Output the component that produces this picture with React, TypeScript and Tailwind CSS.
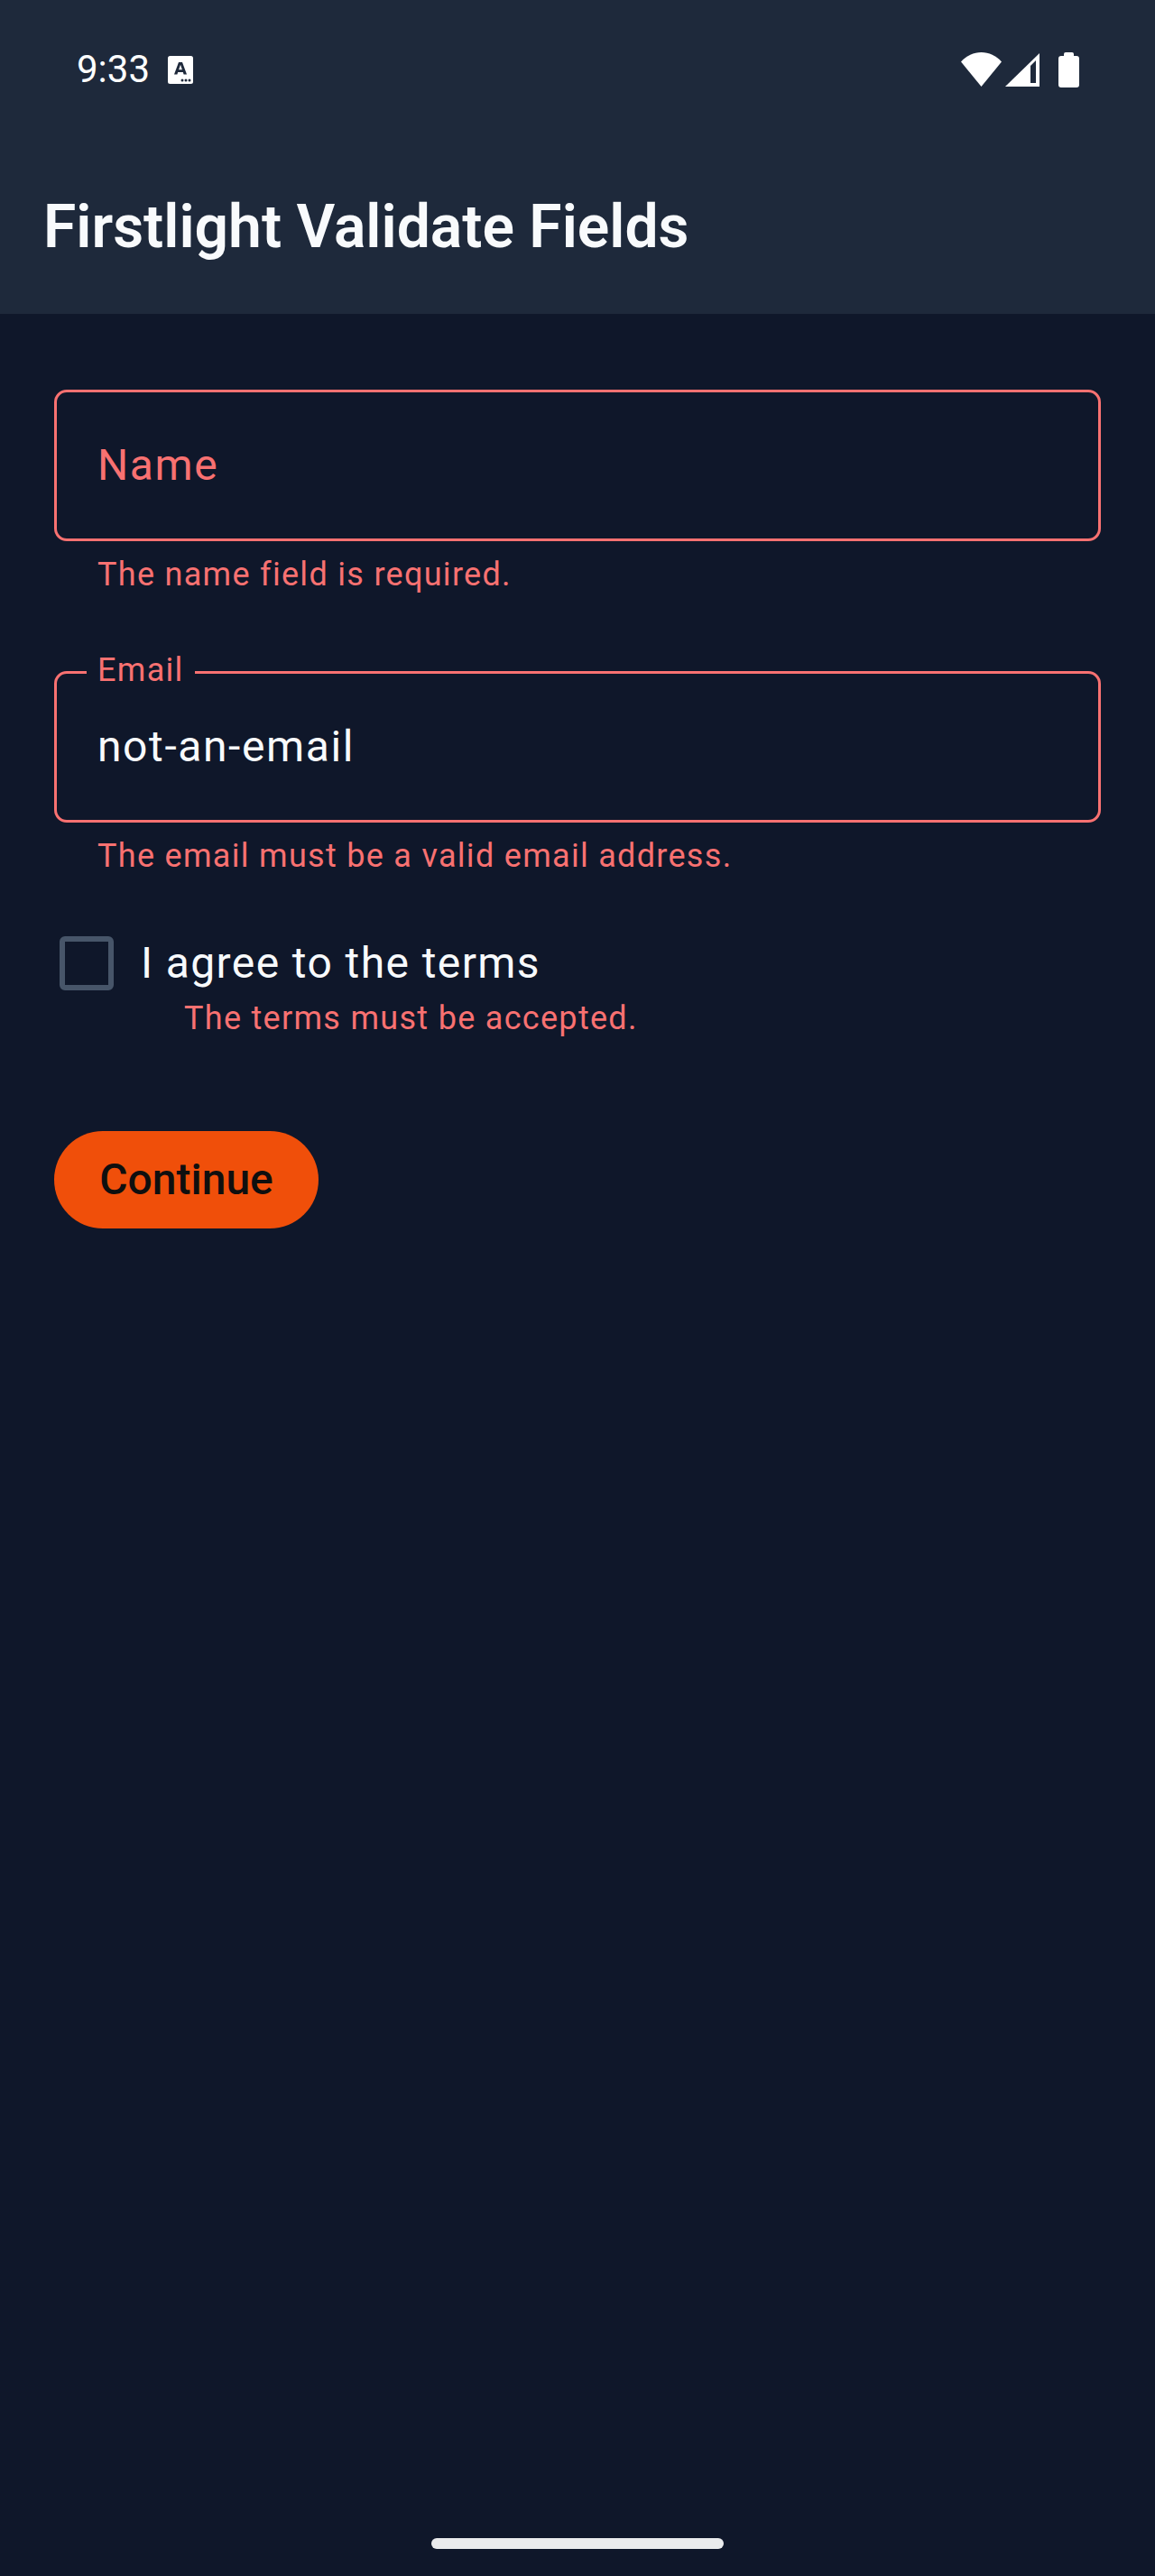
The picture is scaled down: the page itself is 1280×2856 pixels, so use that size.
import React from 'react';

function WifiIcon() {
  return (
    <svg width="45" height="38" viewBox="0 0 45 38" className="block">
      <path d="M0 10.5C6 3.8 14 0 22.5 0S39 3.8 45 10.5L22.5 38Z" fill="#fff" />
    </svg>
  );
}

function SignalIcon() {
  return (
    <svg width="38" height="37" viewBox="0 0 38 37" className="block">
      <path d="M38 0V37H0Z" fill="#fff" />
      <path d="M28 14L34 8V33H28Z" fill="#1e293b" />
    </svg>
  );
}

function BatteryIcon() {
  return (
    <svg width="23" height="39" viewBox="0 0 23 39" className="block">
      <path d="M6 4V2Q6 0 8 0H15Q17 0 17 2V4H20Q23 4 23 7V36Q23 39 20 39H3Q0 39 0 36V7Q0 4 3 4Z" fill="#fff" />
    </svg>
  );
}

function KeyboardBadge() {
  return (
    <svg width="28" height="31" viewBox="0 0 28 31" className="block">
      <rect width="28" height="31" rx="2.5" fill="#fff" />
      <path d="M7 20.5L12 7H16L21 20.5H17.6L16.8 18H11.2L10.4 20.5ZM12.1 15.2H15.9L14 9.8Z" fill="#1e293b" />
      <circle cx="16" cy="27" r="1.5" fill="#1e293b" />
      <circle cx="20" cy="27" r="1.5" fill="#1e293b" />
      <circle cx="24" cy="27" r="1.5" fill="#1e293b" />
    </svg>
  );
}

function FieldError({ children }: { children: React.ReactNode }) {
  return <p className="mt-[17px] pl-[48px] text-[36px] leading-[40px] tracking-[1.3px] text-[#f87171]">{children}</p>;
}

function App() {
  return (
    <div className="flex h-[2856px] w-[1280px] flex-col bg-[#0f172a] font-['Roboto',sans-serif]">
      {/* Header */}
      <header className="h-[348px] bg-[#1e293b] px-[48px]">
        <div className="flex h-[154px] items-center justify-between pl-[37px] pr-[36px]">
          <div className="flex items-center gap-[20px]">
            <span className="text-[42px] leading-[48px] text-white">9:33</span>
            <KeyboardBadge />
          </div>
          <div className="flex items-center">
            <WifiIcon />
            <div className="ml-[4px]"><SignalIcon /></div>
            <div className="ml-[21px]"><BatteryIcon /></div>
          </div>
        </div>
        <h1 className="mt-[56px] text-[66px] leading-[84px] font-semibold text-[#f8fafc]">Firstlight Validate Fields</h1>
      </header>

      {/* Form */}
      <main className="flex-1 px-[60px] pt-[84px]">
        <div className="flex h-[168px] items-center rounded-[14px] border-[3px] border-[#f87171] pl-[45px]">
          <span className="text-[48px] leading-[60px] tracking-[1.6px] text-[#f87171]">Name</span>
        </div>
        <FieldError>The name field is required.</FieldError>

        <div className="relative mt-[87px] flex h-[168px] items-center rounded-[14px] border-[3px] border-[#f87171] pl-[45px]">
          <span className="absolute top-[-24px] left-[33px] bg-[#0f172a] px-[12px] text-[36px] leading-[40px] tracking-[1.3px] text-[#f87171]">Email</span>
          <span className="text-[48px] leading-[60px] tracking-[1.6px] text-[#f8fafc]">not-an-email</span>
        </div>
        <FieldError>The email must be a valid email address.</FieldError>

        <div className="mt-[69px] flex items-center pl-[6px]">
          <div className="h-[60px] w-[60px] rounded-[6px] border-[6px] border-[#475569]" />
          <span className="ml-[30px] text-[48px] leading-[56px] tracking-[1.4px] text-[#f8fafc]">I agree to the terms</span>
        </div>
        <p className="mt-[11px] pl-[144px] text-[36px] leading-[40px] tracking-[1.3px] text-[#f87171]">The terms must be accepted.</p>

        <button className="mt-[105px] block h-[108px] w-[293px] rounded-full bg-[#f04f0a] text-center text-[48px] font-medium text-[#0f0f0f]">Continue</button>
      </main>

      {/* Home indicator */}
      <div className="flex h-[52px] justify-center bg-[#0f172a] pt-[10px]">
        <div className="h-[12px] w-[324px] rounded-[6px] bg-[#eaebed]" />
      </div>
    </div>
  );
}

export default App;
